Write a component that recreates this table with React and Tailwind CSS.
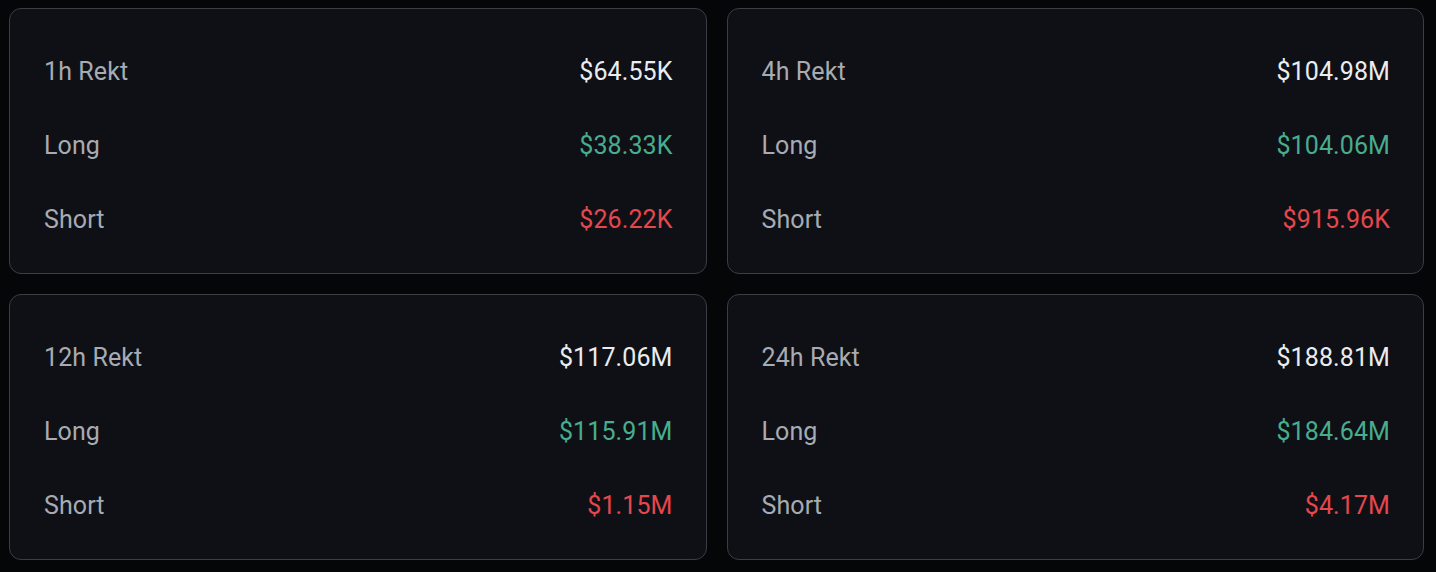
const stats = [
  { title: "1h Rekt", total: "$64.55K", long: "$38.33K", short: "$26.22K" },
  { title: "4h Rekt", total: "$104.98M", long: "$104.06M", short: "$915.96K" },
  { title: "12h Rekt", total: "$117.06M", long: "$115.91M", short: "$1.15M" },
  { title: "24h Rekt", total: "$188.81M", long: "$184.64M", short: "$4.17M" },
];

const Row = ({ label, value, color }) => (
  <div className="h-[74px] flex items-center justify-between">
    <span className="text-[#a7abb3]">{label}</span>
    <span className={color}>{value}</span>
  </div>
);

const RektCard = ({ item }) => (
  <div className="h-[266px] rounded-[12px] border-[1.5px] border-[#3a3d43] bg-[#0f1015] pl-[34px] pr-[33px] pt-[26px]">
    <Row label={item.title} value={item.total} color="text-[#eaecef]" />
    <Row label="Long" value={item.long} color="text-[#47ad8e]" />
    <Row label="Short" value={item.short} color="text-[#e5474d]" />
  </div>
);

export default function App() {
  return (
    <div
      className="w-[1436px] h-[572px] bg-[#050608] pl-[9px] pr-[12px] pt-[8px] grid grid-cols-2 gap-[20px] content-start text-[25px] tracking-[0.1px]"
      style={{ fontFamily: "Roboto, 'Noto Sans', sans-serif" }}
    >
      {stats.map((s) => (
        <RektCard key={s.title} item={s} />
      ))}
    </div>
  );
}
